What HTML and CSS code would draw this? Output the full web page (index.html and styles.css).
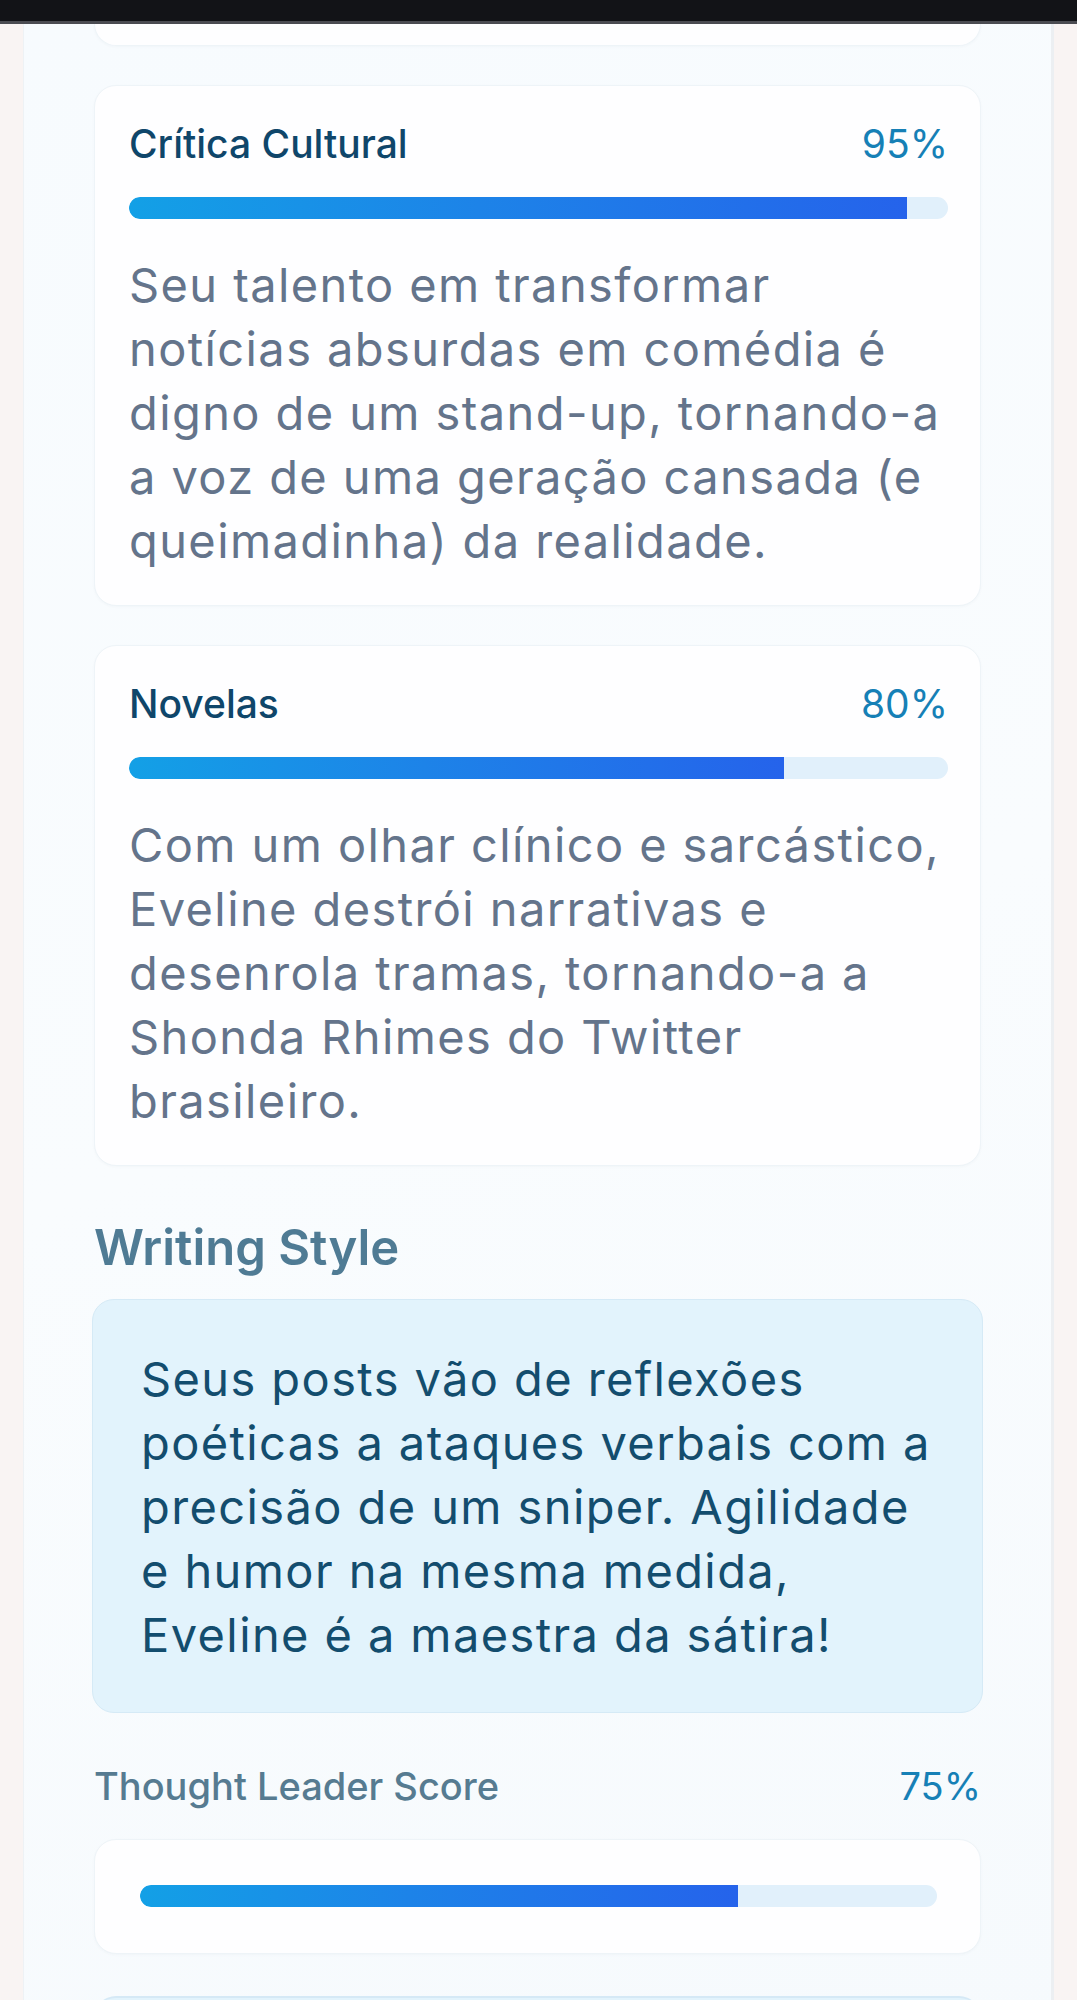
FILE: index.html
```html
<!DOCTYPE html>
<html lang="pt-BR">
<head>
<meta charset="utf-8">
<title>Perfil</title>
<link rel="stylesheet" href="styles.css">
</head>
<body>
<div class="statusbar"></div>
<main class="panel">
  <div class="card card-cut"></div>

  <section class="card skill">
    <div class="skill-head">
      <span class="skill-name">Crítica Cultural</span>
      <span class="pct">95%</span>
    </div>
    <div class="track"><div class="fill" style="width:95%"></div></div>
    <p class="skill-text">Seu talento em transformar notícias absurdas em comédia é digno de um stand-up, tornando-a a voz de uma geração cansada (e queimadinha) da realidade.</p>
  </section>

  <section class="card skill">
    <div class="skill-head">
      <span class="skill-name">Novelas</span>
      <span class="pct">80%</span>
    </div>
    <div class="track"><div class="fill" style="width:80%"></div></div>
    <p class="skill-text">Com um olhar clínico e sarcástico, Eveline destrói narrativas e desenrola tramas, tornando-a a Shonda Rhimes do Twitter brasileiro.</p>
  </section>

  <h2 class="section-title">Writing Style</h2>
  <div class="style-box">
    <p>Seus posts vão de reflexões poéticas a ataques verbais com a precisão de um sniper. Agilidade e humor na mesma medida, Eveline é a maestra da sátira!</p>
  </div>

  <div class="score-head">
    <span class="score-name">Thought Leader Score</span>
    <span class="pct">75%</span>
  </div>
  <div class="card score-card">
    <div class="track"><div class="fill" style="width:75%"></div></div>
  </div>

  <div class="next-box"></div>
</main>
</body>
</html>
```
FILE: styles.css
```css
* { box-sizing: border-box; }

html, body {
  margin: 0;
  padding: 0;
}

body {
  background: #f9f4f3;
  font-family: Inter, "Noto Sans", sans-serif;
  height: 2000px;
  overflow: hidden;
}

.statusbar {
  height: 24px;
  background: #121317;
  border-bottom: 3px solid #4b4c52;
}

.panel {
  margin: 0 23px;
  padding: 0 70px;
  min-height: 1976px;
  background: linear-gradient(160deg, #f7fbfe 0%, #f9fcfe 50%, #f6fafd 100%);
  border-left: 1px solid #eef2f5;
  border-right: 3px solid #eceff2;
}

.card {
  background: #fefeff;
  border: 1px solid #eef4f8;
  border-radius: 22px;
  box-shadow: 0 1px 3px rgba(15, 60, 100, 0.03);
}

.card-cut {
  height: 22px;
  border-top: none;
  border-radius: 0 0 22px 22px;
}

.skill {
  margin-top: 39px;
  padding: 34px 32px 32px 34px;
}

.skill-head {
  display: flex;
  justify-content: space-between;
  align-items: baseline;
  font-size: 39px;
  line-height: 47px;
  font-weight: 500;
}

.skill-name {
  color: #0f466a;
}

.pct {
  color: #1680b6;
  font-weight: 400;
}

.track {
  height: 22px;
  background: #e1f0fb;
  border-radius: 11px;
  overflow: hidden;
  margin-top: 30px;
}

.fill {
  height: 100%;
  background: linear-gradient(90deg, #13a0e6 0%, #1d83e8 45%, #2563eb 100%);
  border-radius: 11px 0 0 11px;
}

.skill-text {
  margin: 34px 0 0;
  font-size: 47px;
  line-height: 64px;
  letter-spacing: 1.4px;
  color: #64748b;
}

.section-title {
  margin: 52px 0 0;
  font-size: 49px;
  line-height: 59px;
  font-weight: 600;
  color: #4f7b94;
}

.style-box {
  margin: 22px -2px 0;
  padding: 47px 38px 45px 48px;
  background: #e2f3fc;
  border: 1px solid #d5eaf6;
  border-radius: 22px;
}

.style-box p {
  margin: 0;
  font-size: 47px;
  line-height: 64px;
  letter-spacing: 1.4px;
  color: #134d6e;
}

.score-head {
  display: flex;
  justify-content: space-between;
  align-items: baseline;
  margin-top: 50px;
  font-size: 38px;
  line-height: 47px;
  font-weight: 500;
}

.score-name {
  color: #567b91;
}

.score-card {
  margin-top: 29px;
  padding: 45px 43px 46px 45px;
}

.score-card .track {
  margin-top: 0;
}

.next-box {
  margin-top: 42px;
  height: 40px;
  background: #e2f3fc;
  border-top: 2px solid #d5e9f6;
  border-radius: 22px 22px 0 0;
}
```
